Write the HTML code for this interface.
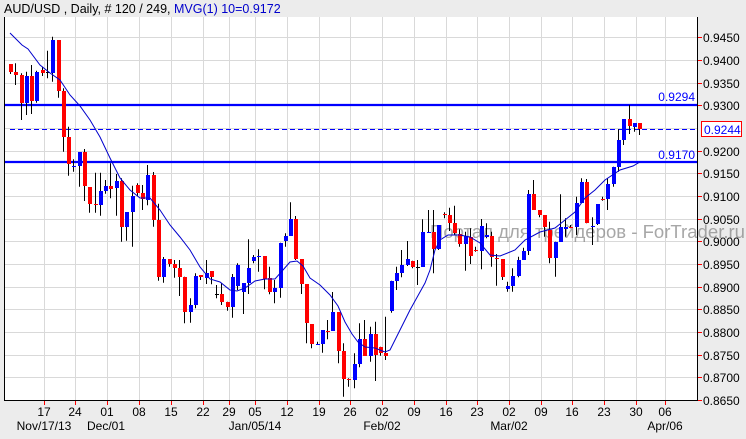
<!DOCTYPE html>
<html><head><meta charset="utf-8"><style>
html,body{margin:0;padding:0;background:#ececec;width:746px;height:439px;overflow:hidden}
svg{display:block;font-family:"Liberation Sans",sans-serif}
</style></head><body>
<svg width="746" height="439" viewBox="0 0 746 439" xmlns="http://www.w3.org/2000/svg">
<rect x="0" y="0" width="746" height="439" fill="#ececec"/>
<rect x="4" y="17" width="693" height="383" fill="#fff"/>
<text x="4" y="13" font-size="12.5" fill="#000">AUD/USD , Daily, # 120 / 249, <tspan fill="#0000cc">MVG(1) 10=0.9172</tspan></text>
<g stroke="#d9d9d9" stroke-width="1">
<path d="M4 37.5H697M4 60.5H697M4 83.5H697M4 105.5H697M4 128.5H697M4 151.5H697M4 173.5H697M4 196.5H697M4 219.5H697M4 241.5H697M4 264.5H697M4 287.5H697M4 309.5H697M4 332.5H697M4 355.5H697M4 377.5H697"/>
<path d="M44.5 17V400M75.5 17V400M107.5 17V400M139.5 17V400M171.5 17V400M203.5 17V400M229.5 17V400M255.5 17V400M287.5 17V400M319.5 17V400M350.5 17V400M382.5 17V400M414.5 17V400M446.5 17V400M477.5 17V400M509.5 17V400M541.5 17V400M572.5 17V400M604.5 17V400M636.5 17V400M665.5 17V400"/>
</g>
<text x="430" y="238" font-size="18" fill="#8a8a8a" fill-opacity="0.75" textLength="315" lengthAdjust="spacingAndGlyphs">Портал для трейдеров - ForTrader.ru</text>
<path d="M4 105H697M4 162H697" stroke="#0000ff" stroke-width="2.2"/>
<path d="M10 129.5H697" stroke="#0000ff" stroke-width="1" stroke-dasharray="5,3"/>
<text x="695" y="101" font-size="12" fill="#0000ff" text-anchor="end">0.9294</text>
<text x="695" y="159" font-size="12" fill="#0000ff" text-anchor="end">0.9170</text>
<path stroke="#000" stroke-width="1" fill="none" d="M10.5 64V74M15.5 63.3V85M21.5 73.3V120M26.5 71.7V115M31.5 65V114M36.5 70.7V102.7M42.5 66.7V76M47.5 50.7V78.3M52.5 36.7V81.7M58.5 40V97.7M63.5 88.3V151.7M68.5 126.7V175.7M73.5 159.3V171.7M79.5 152V186.7M84.5 149V201M89.5 187V212.7M95.5 172.7V212.7M100.5 172.7V215.7M105.5 180V193.7M110.5 163.3V198.3M116.5 174V215.7M121.5 178.3V241.7M126.5 212V240.7M132.5 185.7V246.7M137.5 183.3V195.7M142.5 185V210M147.5 165V205.3M153.5 172V226.7M158.5 203.7V280.7M163.5 257V282.7M169.5 259V266.7M174.5 260V277.7M179.5 260V296M184.5 276.7V323.3M190.5 298.3V322.7M195.5 273.3V308.3M200.5 275V280M206.5 260V284M211.5 271V284.3M216.5 285V298.3M221.5 283.3V305M227.5 301.7V310.7M232.5 274V317.7M237.5 263.3V290M243.5 283.3V314M248.5 239.3V294M253.5 255V263.3M258.5 249.3V271.7M264.5 256V289.3M269.5 266.7V294.3M274.5 280V303.3M280.5 242.7V297.7M285.5 233.3V246.7M290.5 202.3V235.7M295.5 216V260M301.5 259V294M306.5 284.3V343.3M311.5 324V348.3M317.5 341.7V345M322.5 330V352.7M327.5 320V339.3M332.5 292V330.7M338.5 312V363.3M343.5 343.3V396.7M348.5 378.3V386.7M354.5 353.3V388.3M359.5 323.3V367.3M364.5 320V355.7M370.5 326.7V361.7M375.5 321.7V381M380.5 346.7V355.7M385.5 316.7V360M391.5 280.7V312.7M396.5 266.7V290M401.5 250V277.3M407.5 241V266M412.5 260.7V268.3M417.5 260V285M422.5 219.3V267M428.5 210V233M433.5 210V273.3M438.5 225V250M444.5 212.3V218.3M449.5 207.7V231M454.5 205.7V235M459.5 229.3V246.7M465.5 231.7V270.7M470.5 228.3V264M475.5 246.7V251.7M481.5 219V269.3M486.5 223.3V238.3M491.5 231.7V266.7M496.5 254V285.7M502.5 259V280M507.5 281.7V291.7M512.5 268.3V291.7M518.5 256.7V277.3M523.5 247.7V260M528.5 190V255M533.5 180V210M539.5 210V217.3M544.5 215V236.7M549.5 221.7V263.3M555.5 241.7V276.7M560.5 194.3V241.7M565.5 218.3V236.7M570.5 225V228.3M576.5 196.7V235M581.5 178.3V203.3M586.5 179V223.3M592.5 217.3V245M597.5 204V225M602.5 196.7V200.7M607.5 178.3V210M613.5 166.7V186.7M618.5 129.3V171.7M623.5 119V145M629.5 105V134M634.5 123.3V131.7M639.5 123.3V135"/>
<g fill="#ff0000">
<rect x="9" y="64" width="4" height="8"/><rect x="14" y="72" width="4" height="3"/><rect x="20" y="75" width="4" height="28"/><rect x="30" y="76" width="4" height="25"/><rect x="41" y="70" width="4" height="3"/><rect x="57" y="40" width="4" height="51"/><rect x="62" y="91" width="4" height="46"/><rect x="67" y="137" width="4" height="27"/><rect x="83" y="152" width="4" height="34"/><rect x="88" y="187" width="4" height="17"/><rect x="94" y="204" width="4" height="1"/><rect x="109" y="186" width="4" height="3"/><rect x="120" y="181" width="4" height="46"/><rect x="136" y="185" width="4" height="8"/><rect x="141" y="193" width="4" height="6"/><rect x="152" y="175" width="4" height="45"/><rect x="157" y="220" width="4" height="57"/><rect x="168" y="259" width="4" height="5"/><rect x="173" y="264" width="4" height="4"/><rect x="178" y="268" width="4" height="9"/><rect x="183" y="277" width="4" height="35"/><rect x="199" y="275" width="4" height="2"/><rect x="210" y="271" width="4" height="6"/><rect x="220" y="294" width="4" height="8"/><rect x="226" y="302" width="4" height="5"/><rect x="263" y="256" width="4" height="23"/><rect x="268" y="278" width="4" height="14"/><rect x="294" y="219" width="4" height="40"/><rect x="300" y="259" width="4" height="25"/><rect x="305" y="284" width="4" height="39"/><rect x="310" y="324" width="4" height="20"/><rect x="326" y="331" width="4" height="1"/><rect x="337" y="312" width="4" height="39"/><rect x="342" y="351" width="4" height="28"/><rect x="347" y="379" width="4" height="1"/><rect x="363" y="339" width="4" height="17"/><rect x="374" y="334" width="4" height="21"/><rect x="379" y="347" width="4" height="6"/><rect x="384" y="353" width="4" height="3"/><rect x="411" y="261" width="4" height="6"/><rect x="432" y="232" width="4" height="17"/><rect x="443" y="214" width="4" height="1"/><rect x="448" y="215" width="4" height="8"/><rect x="453" y="223" width="4" height="10"/><rect x="458" y="234" width="4" height="10"/><rect x="469" y="237" width="4" height="19"/><rect x="474" y="250" width="4" height="1"/><rect x="490" y="236" width="4" height="21"/><rect x="495" y="258" width="4" height="1"/><rect x="501" y="259" width="4" height="18"/><rect x="532" y="194" width="4" height="16"/><rect x="538" y="210" width="4" height="5"/><rect x="543" y="215" width="4" height="12"/><rect x="548" y="230" width="4" height="28"/><rect x="569" y="227" width="4" height="1"/><rect x="585" y="182" width="4" height="41"/><rect x="601" y="199" width="4" height="1"/><rect x="628" y="119" width="4" height="7"/><rect x="638" y="123" width="4" height="6"/>
</g>
<g fill="#0000ff">
<rect x="25" y="76" width="4" height="27"/><rect x="35" y="72" width="4" height="29"/><rect x="51" y="40" width="4" height="33"/><rect x="72" y="166" width="4" height="1"/><rect x="78" y="152" width="4" height="14"/><rect x="99" y="191" width="4" height="14"/><rect x="104" y="186" width="4" height="5"/><rect x="115" y="181" width="4" height="7"/><rect x="125" y="212" width="4" height="15"/><rect x="131" y="196" width="4" height="16"/><rect x="146" y="175" width="4" height="25"/><rect x="162" y="259" width="4" height="18"/><rect x="189" y="305" width="4" height="7"/><rect x="194" y="276" width="4" height="29"/><rect x="205" y="273" width="4" height="5"/><rect x="231" y="277" width="4" height="30"/><rect x="236" y="265" width="4" height="21"/><rect x="242" y="283" width="4" height="9"/><rect x="247" y="268" width="4" height="15"/><rect x="252" y="257" width="4" height="4"/><rect x="257" y="256" width="4" height="1"/><rect x="273" y="288" width="4" height="4"/><rect x="279" y="243" width="4" height="45"/><rect x="284" y="236" width="4" height="5"/><rect x="289" y="219" width="4" height="17"/><rect x="316" y="344" width="4" height="1"/><rect x="321" y="330" width="4" height="14"/><rect x="331" y="312" width="4" height="19"/><rect x="353" y="364" width="4" height="16"/><rect x="358" y="339" width="4" height="25"/><rect x="369" y="334" width="4" height="22"/><rect x="390" y="281" width="4" height="30"/><rect x="395" y="273" width="4" height="8"/><rect x="400" y="265" width="4" height="8"/><rect x="406" y="259" width="4" height="6"/><rect x="421" y="232" width="4" height="35"/><rect x="427" y="232" width="4" height="1"/><rect x="437" y="225" width="4" height="24"/><rect x="464" y="236" width="4" height="8"/><rect x="480" y="226" width="4" height="25"/><rect x="485" y="235" width="4" height="2"/><rect x="506" y="286" width="4" height="3"/><rect x="511" y="276" width="4" height="10"/><rect x="517" y="260" width="4" height="16"/><rect x="522" y="251" width="4" height="9"/><rect x="527" y="194" width="4" height="57"/><rect x="554" y="242" width="4" height="16"/><rect x="559" y="227" width="4" height="15"/><rect x="564" y="227" width="4" height="2"/><rect x="575" y="203" width="4" height="24"/><rect x="580" y="182" width="4" height="21"/><rect x="591" y="226" width="4" height="1"/><rect x="596" y="204" width="4" height="20"/><rect x="606" y="184" width="4" height="15"/><rect x="612" y="167" width="4" height="17"/><rect x="617" y="140" width="4" height="27"/><rect x="622" y="119" width="4" height="21"/><rect x="633" y="123" width="4" height="4"/>
</g>
<g fill="#000"><rect x="46" y="72" width="4" height="1"/><rect x="215" y="294" width="4" height="1"/><rect x="416" y="267" width="4" height="1"/></g>
<polyline fill="none" stroke="#0000cc" stroke-width="1" points="10,33 22,45 28,49 40,65 50,73 60,80 70,95 80,106 90,120 100,137 110,158 120,178 130,190 140,198 150,198 160,210 170,225 180,237 190,250 200,267 210,279 220,282 230,290 237,291 245,288 255,281 265,279 275,279 283,270 290,262 297,261 303,266 310,278 320,285 330,295 338,306 345,322 352,334 358,342 365,347 375,348 385,352 390,350 400,330 410,310 420,292 425,283 430,270 435,250 440,240 448,235 460,235 470,237 480,243 490,255 500,256 515,250 525,240 540,232 555,228 565,220 575,212 585,198 595,190 605,180 620,170 633,166 640,162"/>
<path d="M4.5 17V400.5H697.5V17" fill="none" stroke="#000" stroke-width="1"/>
<g stroke="#ff0000"><path d="M698 37.5h4M698 60.5h4M698 83.5h4M698 105.5h4M698 151.5h4M698 173.5h4M698 196.5h4M698 219.5h4M698 241.5h4M698 264.5h4M698 287.5h4M698 309.5h4M698 332.5h4M698 355.5h4M698 377.5h4M698 400.5h4"/>
<path d="M44.5 401v4M75.5 401v4M107.5 401v4M139.5 401v4M171.5 401v4M203.5 401v4M229.5 401v4M255.5 401v4M287.5 401v4M319.5 401v4M350.5 401v4M382.5 401v4M414.5 401v4M446.5 401v4M477.5 401v4M509.5 401v4M541.5 401v4M572.5 401v4M604.5 401v4M636.5 401v4M665.5 401v4"/></g>
<g font-size="12" fill="#000">
<text x="703" y="42">0.9450</text><text x="703" y="65">0.9400</text><text x="703" y="88">0.9350</text><text x="703" y="110">0.9300</text><text x="703" y="156">0.9200</text><text x="703" y="178">0.9150</text><text x="703" y="201">0.9100</text><text x="703" y="224">0.9050</text><text x="703" y="246">0.9000</text><text x="703" y="269">0.8950</text><text x="703" y="292">0.8900</text><text x="703" y="314">0.8850</text><text x="703" y="337">0.8800</text><text x="703" y="360">0.8750</text><text x="703" y="382">0.8700</text><text x="703" y="405">0.8650</text>
</g>
<rect x="701.5" y="121.5" width="40" height="15" fill="#fff" stroke="#ff0000"/>
<text x="704" y="134" font-size="12" fill="#0000ff">0.9244</text>
<g font-size="12" fill="#000" text-anchor="middle">
<text x="44" y="416">17</text><text x="75" y="416">24</text><text x="107" y="416">01</text><text x="139" y="416">08</text><text x="171" y="416">15</text><text x="203" y="416">22</text><text x="229" y="416">29</text><text x="255" y="416">05</text><text x="287" y="416">12</text><text x="319" y="416">19</text><text x="350" y="416">26</text><text x="382" y="416">02</text><text x="414" y="416">09</text><text x="446" y="416">16</text><text x="477" y="416">23</text><text x="509" y="416">02</text><text x="541" y="416">09</text><text x="572" y="416">16</text><text x="604" y="416">23</text><text x="636" y="416">30</text><text x="665" y="416">06</text>
<text x="44" y="430">Nov/17/13</text><text x="106" y="430">Dec/01</text><text x="255" y="430">Jan/05/14</text><text x="382" y="430">Feb/02</text><text x="509" y="430">Mar/02</text><text x="665" y="430">Apr/06</text>
</g>
</svg>
</body></html>
